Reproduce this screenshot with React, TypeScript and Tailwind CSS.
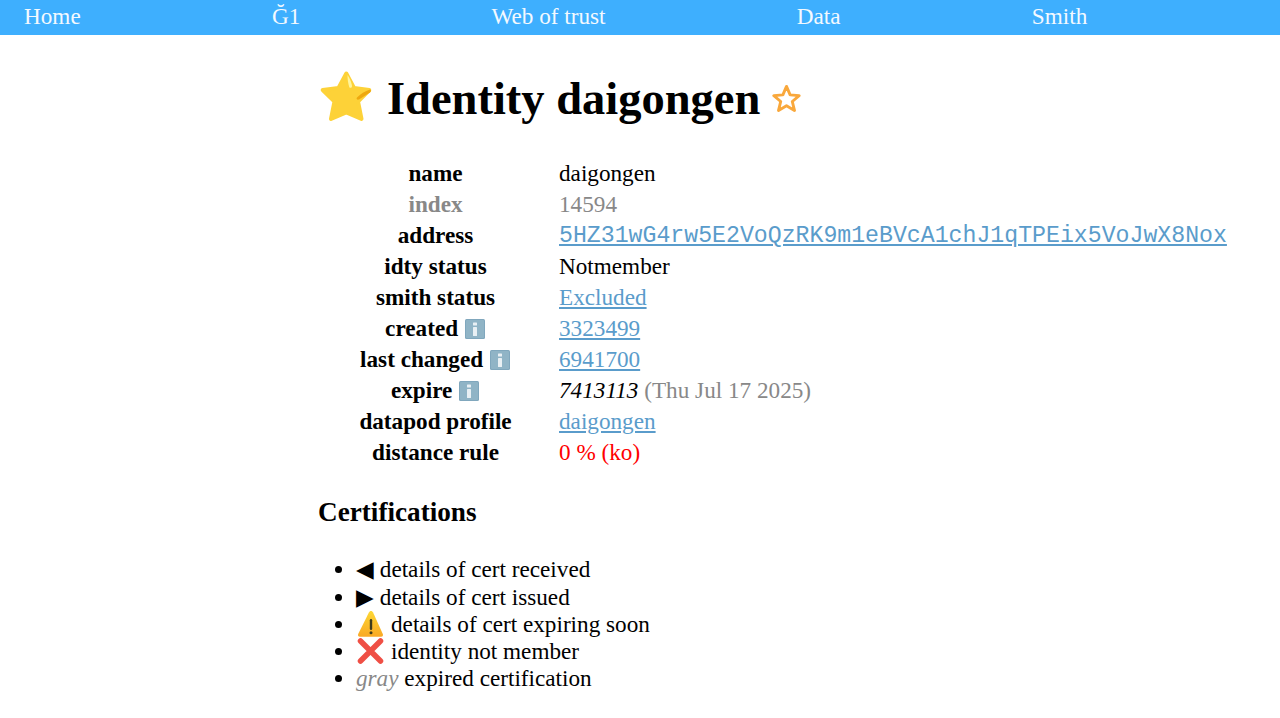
const Info = () => (
  <svg viewBox="0 0 20 20" className="inline-block w-[20px] h-[20px] align-[-3px] ml-[1px] mr-[1px]">
    <rect x="0" y="0" width="20" height="20" rx="1.500" fill="#80a7bd" />
    <rect x="1" y="1" width="18" height="18" rx="1" fill="#90b4c6" />
    <rect x="8" y="3.500" width="4" height="3" rx="0.500" fill="#e9f0f4" />
    <rect x="8" y="8" width="4" height="9" rx="0.500" fill="#e9f0f4" />
  </svg>
);

const Link = ({ children, mono }: { children: React.ReactNode; mono?: boolean }) => (
  <a className={"text-[#5a9ccb] underline" + (mono ? " font-['Liberation_Mono',monospace]" : "")}>{children}</a>
);

const Th = ({ children, gray }: { children: React.ReactNode; gray?: boolean }) => (
  <th className={"p-0 font-bold text-center align-middle w-[241px] pr-[6px] h-[31px] whitespace-nowrap" + (gray ? " text-[#888888]" : "")}>
    {children}
  </th>
);
const Td = ({ children, gray }: { children: React.ReactNode; gray?: boolean }) => (
  <td className={"p-0 whitespace-nowrap align-middle" + (gray ? " text-[#888888]" : "")}>{children}</td>
);

export default function App() {
  return (
    <div className="font-['Liberation_Serif',serif] text-[23.2px] leading-[27px] text-black bg-white min-h-[718px] overflow-hidden">
      <nav className="bg-[#3eaffe] h-[35px] flex items-center pl-6 pb-[2px] gap-[191.25px] text-[#f3f9ff]">
        <a>Home</a>
        <a>Ğ1</a>
        <a>Web of trust</a>
        <a>Data</a>
        <a>Smith</a>
      </nav>
      <main className="w-[644px] mx-auto">
        <h1 className="text-[46.5px] leading-[52px] font-bold mt-[38px] flex items-center h-[52px]">
          <svg viewBox="0 0 56 56" className="w-[56px] h-[56px] shrink-0 mr-[13px] -translate-y-[3px]">
            <path d="M28.300 5.500L36 20L51.300 22L40 33.500L43.500 51L28.300 44.500L13 51L16.500 33.500L4.700 22L20.500 20Z" fill="#fdd238" stroke="#fdd238" strokeWidth="4" strokeLinejoin="round" />
            <path d="M29.500 7C31 9 33.500 14 34 18C34 20 32 20.500 31.200 19C30 15 29.500 11 29.500 7Z" fill="#fff59d" />
            <path d="M52 21.500C53.500 22.500 53 23.500 52 24.500L41 31.500C39 32 38 31 39 29.500C42.500 26 47 23 52 21.500Z" fill="#eea80f" />
          </svg>
          <span>Identity daigongen</span>
          <svg viewBox="0 0 24 24" className="w-[29px] h-[29px] ml-[12px] -translate-y-px" fill="none" stroke="#f9a83c" strokeWidth="2.400" strokeLinejoin="round">
            <path d="M12 2l3 7 7.500.6-5.700 4.900 1.800 7.400L12 18l-6.600 3.900 1.800-7.400L1.500 9.600 9 9z" />
          </svg>
        </h1>
        <table className="mt-[33px] border-collapse w-max">
          <tbody>
            <tr><Th>name</Th><Td>daigongen</Td></tr>
            <tr><Th gray>index</Th><Td gray>14594</Td></tr>
            <tr><Th>address</Th><Td><Link mono>5HZ31wG4rw5E2VoQzRK9m1eBVcA1chJ1qTPEix5VoJwX8Nox</Link></Td></tr>
            <tr><Th>idty status</Th><Td>Notmember</Td></tr>
            <tr><Th>smith status</Th><Td><Link>Excluded</Link></Td></tr>
            <tr><Th>created <Info /></Th><Td><Link>3323499</Link></Td></tr>
            <tr><Th>last changed <Info /></Th><Td><Link>6941700</Link></Td></tr>
            <tr><Th>expire <Info /></Th><Td><i>7413113</i> <span className="text-[#888888]">(Thu Jul 17 2025)</span></Td></tr>
            <tr><Th>datapod profile</Th><Td><Link>daigongen</Link></Td></tr>
            <tr><Th>distance rule</Th><Td><span className="text-[#ff0000]">0 % (ko)</span></Td></tr>
          </tbody>
        </table>
        <h2 className="text-[27.2px] leading-[32px] font-bold mt-[28px]">Certifications</h2>
        <ul className="list-disc pl-[38px] mt-[28px]">
          <li className="h-[28px]">◀ details of cert received</li>
          <li className="h-[27px]">▶ details of cert issued</li>
          <li className="h-[27px]">
            <svg viewBox="0 0 28 28" className="inline-block w-[28px] h-[28px] align-[-2px] -my-[4px] mr-[7px]">
              <defs>
                <linearGradient id="warnFill" x1="0" y1="0" x2="0" y2="1">
                  <stop offset="0" stopColor="#fdd835" />
                  <stop offset="1" stopColor="#f9a825" />
                </linearGradient>
              </defs>
              <path d="M15 1c1 0 1.600.6 2.100 1.500l9.700 21.500c.6 1.500-.2 2.800-1.800 2.800H4c-1.600 0-2.400-1.300-1.800-2.800L12.900 2.500C13.400 1.600 14 1 15 1z" fill="url(#warnFill)" />
              <rect x="13.800" y="9" width="2.400" height="11" rx="1.200" fill="#3e3a1c" />
              <circle cx="15" cy="22.800" r="1.500" fill="#3e3a1c" />
            </svg>
            details of cert expiring soon
          </li>
          <li className="h-[27px]">
            <svg viewBox="0 0 28 28" className="inline-block w-[28px] h-[28px] align-[-2px] -my-[4px] mr-[7px]">
              <path d="M4.500 4l20 20M24.500 4L4.500 24" stroke="#ef4f45" strokeWidth="5.500" strokeLinecap="round" />
            </svg>
            identity not member
          </li>
          <li className="h-[27px]"><i className="text-[#888888]">gray</i> expired certification</li>
        </ul>
      </main>
    </div>
  );
}
